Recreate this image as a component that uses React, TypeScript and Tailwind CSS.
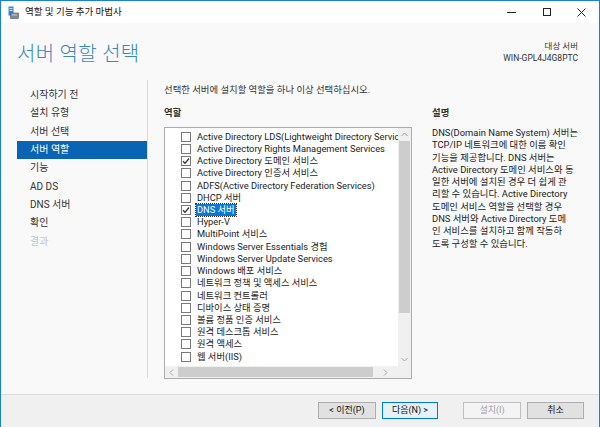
import React from "react";

const roles: { label: string; checked?: boolean; selected?: boolean }[] = [
  { label: "Active Directory LDS(Lightweight Directory Services)" },
  { label: "Active Directory Rights Management Services" },
  { label: "Active Directory 도메인 서비스", checked: true },
  { label: "Active Directory 인증서 서비스" },
  { label: "ADFS(Active Directory Federation Services)" },
  { label: "DHCP 서버" },
  { label: "DNS 서버", checked: true, selected: true },
  { label: "Hyper-V" },
  { label: "MultiPoint 서비스" },
  { label: "Windows Server Essentials 경험" },
  { label: "Windows Server Update Services" },
  { label: "Windows 배포 서비스" },
  { label: "네트워크 정책 및 액세스 서비스" },
  { label: "네트워크 컨트롤러" },
  { label: "디바이스 상태 증명" },
  { label: "볼륨 정품 인증 서비스" },
  { label: "원격 데스크톱 서비스" },
  { label: "원격 액세스" },
  { label: "웹 서버(IIS)" },
];

const nav = [
  { label: "시작하기 전" },
  { label: "설치 유형" },
  { label: "서버 선택" },
  { label: "서버 역할", active: true },
  { label: "기능" },
  { label: "AD DS" },
  { label: "DNS 서버" },
  { label: "확인" },
  { label: "결과", disabled: true },
];

const desc = [
  "DNS(Domain Name System) 서버는",
  "TCP/IP 네트워크에 대한 이름 확인",
  "기능을 제공합니다. DNS 서버는",
  "Active Directory 도메인 서비스와 동",
  "일한 서버에 설치된 경우 더 쉽게 관",
  "리할 수 있습니다. Active Directory",
  "도메인 서비스 역할을 선택할 경우",
  "DNS 서버와 Active Directory 도메",
  "인 서비스를 설치하고 함께 작동하",
  "도록 구성할 수 있습니다.",
];

function Check() {
  return (
    <svg width="8" height="8" viewBox="0 0 8 8" className="block">
      <path d="M1 4.2 L3 6.3 L7 1.5" fill="none" stroke="#333" strokeWidth="1.3" />
    </svg>
  );
}

function AppIcon() {
  return (
    <svg width="11" height="13" viewBox="0 0 11 13">
      <rect x="0.5" y="0.5" width="5" height="9" fill="#2e88d8" />
      <rect x="1.5" y="2" width="3" height="1" fill="#bfe0fa" />
      <rect x="1.5" y="4" width="3" height="1" fill="#bfe0fa" />
      <rect x="2.5" y="7" width="8" height="5.5" fill="#7d8b99" stroke="#4f5a66" strokeWidth="0.6" />
      <rect x="4" y="8.5" width="5" height="0.8" fill="#dfe6ec" />
    </svg>
  );
}

export default function App() {
  return (
    <div className="w-[600px] h-[427px] overflow-hidden flex flex-col border-x border-t border-[#1a7fd6] bg-[#f9f9f9] text-[#222] font-[family-name:Roboto,'Noto_Sans_CJK_KR',sans-serif]">
      {/* title bar */}
      <div className="h-[22px] shrink-0 bg-white flex items-center">
        <div className="pl-[7px] pr-[6px] flex items-center">
          <AppIcon />
        </div>
        <div className="text-[9.5px] leading-none text-[#111]">역할 및 기능 추가 마법사</div>
        <div className="ml-auto flex h-full">
          <div className="w-[35px] flex items-center justify-center">
            <div className="w-[9px] h-px bg-[#222]" />
          </div>
          <div className="w-[35px] flex items-center justify-center">
            <div className="w-[8px] h-[8px] border border-[#222]" />
          </div>
          <div className="w-[35px] flex items-center justify-center">
            <svg width="9" height="9" viewBox="0 0 9 9">
              <path d="M0.5 0.5 L8.5 8.5 M8.5 0.5 L0.5 8.5" stroke="#222" strokeWidth="1" />
            </svg>
          </div>
        </div>
      </div>

      {/* header */}
      <div className="h-[57px] shrink-0 flex items-start justify-between pl-[16px] pr-[21px]">
        <div className="pt-[18px] text-[20px] leading-[26px] font-light text-[#3a86c0] tracking-[0.3px]">서버 역할 선택</div>
        <div className="pt-[18px] flex flex-col items-end text-[8.5px] leading-[11.5px] text-[#333]">
          <div>대상 서버</div>
          <div>WIN-GPL4J4G8PTC</div>
        </div>
      </div>

      {/* body */}
      <div className="h-[306px] shrink-0 flex">
        {/* nav */}
        <div className="w-[147px] shrink-0 border-r border-[#d9d9d9] pt-[6px] pl-[16px] mb-[8px]">
          {nav.map((n) => (
            <div
              key={n.label}
              className={
                "h-[18.33px] flex items-center pl-[13px] text-[10px] leading-none " +
                (n.active ? "bg-[#0a64b4] text-white" : n.disabled ? "text-[#c6c6c6]" : "text-[#333]")
              }
            >
              {n.label}
            </div>
          ))}
        </div>

        {/* main */}
        <div className="flex-1 pl-[16px] pt-[4px] flex flex-col">
          <div className="text-[9.4px] leading-[12px] text-[#333]">선택한 서버에 설치할 역할을 하나 이상 선택하십시오.</div>
          <div className="flex gap-[20px] mt-[11px]">
            <div className="flex flex-col">
              <div className="text-[9.4px] leading-[12px] font-bold text-[#333]">역할</div>
              <div className="mt-[8px] w-[248px] h-[252px] border border-[#acacac] bg-white grid grid-cols-[1fr_13px] grid-rows-[1fr_12px]">
                <div className="overflow-hidden pt-[2.6px] pl-[16px] whitespace-nowrap">
                  {roles.map((r) => (
                    <div key={r.label} className="h-[12.22px] flex items-center">
                      <div className="w-[10px] h-[10px] border border-[#7a7a7a] bg-white flex items-center justify-center shrink-0">
                        {r.checked ? <Check /> : null}
                      </div>
                      <div
                        className={
                          "ml-[5px] px-[1px] text-[9.3px] leading-[12px] " +
                          (r.selected ? "bg-[#0a78d7] text-white outline-dotted outline-1 outline-[#333]" : "text-[#222]")
                        }
                      >
                        {r.label}
                      </div>
                    </div>
                  ))}
                </div>
                {/* vertical scrollbar */}
                <div className="bg-[#f0f0f0] flex flex-col items-stretch">
                  <div className="h-[13px] flex items-center justify-center">
                    <svg width="7" height="5" viewBox="0 0 7 5">
                      <path d="M0.5 4 L3.5 1 L6.5 4" fill="none" stroke="#a3a3a3" strokeWidth="1" />
                    </svg>
                  </div>
                  <div className="mx-[1px] h-[172px] bg-[#cdcdcd]" />
                  <div className="flex-1" />
                  <div className="h-[13px] flex items-center justify-center">
                    <svg width="7" height="5" viewBox="0 0 7 5">
                      <path d="M0.5 1 L3.5 4 L6.5 1" fill="none" stroke="#a3a3a3" strokeWidth="1" />
                    </svg>
                  </div>
                </div>
                {/* horizontal scrollbar */}
                <div className="bg-[#f0f0f0] flex items-stretch">
                  <div className="w-[13px] flex items-center justify-center">
                    <svg width="5" height="7" viewBox="0 0 5 7">
                      <path d="M4 0.5 L1 3.5 L4 6.5" fill="none" stroke="#a3a3a3" strokeWidth="1" />
                    </svg>
                  </div>
                  <div className="my-[1px] w-[195px] bg-[#cdcdcd]" />
                  <div className="flex-1 flex items-center justify-center">
                    <svg width="5" height="7" viewBox="0 0 5 7">
                      <path d="M1 0.5 L4 3.5 L1 6.5" fill="none" stroke="#a3a3a3" strokeWidth="1" />
                    </svg>
                  </div>
                </div>
                <div className="bg-[#f0f0f0]" />
              </div>
            </div>
            <div className="flex flex-col">
              <div className="text-[9.4px] leading-[12px] font-bold text-[#333]">설명</div>
              <div className="mt-[8px] text-[9.4px] leading-[12.3px] text-[#222] whitespace-nowrap">
                {desc.map((l) => (
                  <div key={l}>{l}</div>
                ))}
              </div>
            </div>
          </div>
        </div>
      </div>

      {/* footer */}
      <div className="mt-[8px] flex-1 border-t border-[#dcdcdc] bg-[#f0f0f0] flex items-start pt-[7px] pr-[15px] justify-end">
        <div className="flex">
          <button className="w-[58px] h-[17px] border border-[#adadad] bg-[#e1e1e1] text-[9px] leading-none text-[#111]">&lt; 이전(P)</button>
          <button className="ml-[6px] w-[56px] h-[17px] border border-[#0078d7] bg-[#e5f1fb] text-[9px] leading-none text-[#111]">다음(N) &gt;</button>
          <button className="ml-[25px] w-[58px] h-[17px] border border-[#bfbfbf] bg-[#f4f4f4] text-[9px] leading-none text-[#a0a0a0]">설치(I)</button>
          <button className="ml-[6px] w-[57px] h-[17px] border border-[#adadad] bg-[#e1e1e1] text-[9px] leading-none text-[#111]">취소</button>
        </div>
      </div>
    </div>
  );
}
